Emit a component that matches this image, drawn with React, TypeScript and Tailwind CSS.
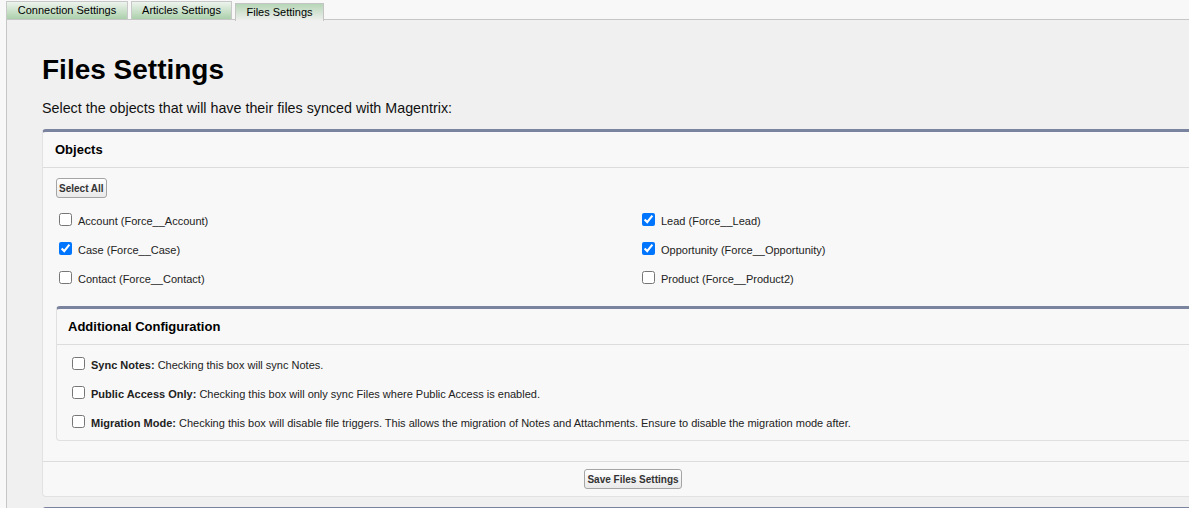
import React from "react";

const objects: [string, boolean][] = [
  ["Account (Force__Account)", false],
  ["Lead (Force__Lead)", true],
  ["Case (Force__Case)", true],
  ["Opportunity (Force__Opportunity)", true],
  ["Contact (Force__Contact)", false],
  ["Product (Force__Product2)", false],
];

const options = [
  { title: "Sync Notes:", text: "Checking this box will sync Notes." },
  { title: "Public Access Only:", text: "Checking this box will only sync Files where Public Access is enabled." },
  {
    title: "Migration Mode:",
    text: "Checking this box will disable file triggers. This allows the migration of Notes and Attachments. Ensure to disable the migration mode after.",
  },
];

function Tab({ label, width, active }: { label: string; width: string; active?: boolean }) {
  if (active) {
    return (
      <div
        className={`relative z-10 mt-[2px] h-[18px] ${width} border border-b-0 border-[#c4c4c4] bg-gradient-to-b from-[#b7d6b7] to-[#f0f0f0] flex items-center justify-center text-[11px] text-black`}
      >
        {label}
      </div>
    );
  }
  return (
    <div
      className={`h-[18px] ${width} border border-b-0 border-[#c8c8c8] bg-gradient-to-b from-[#eef4ee] to-[#abd0ab] flex items-center justify-center text-[11px] text-black`}
    >
      {label}
    </div>
  );
}

function Btn({ children }: { children: React.ReactNode }) {
  return (
    <button className="block h-[20px] px-[2px] pt-[1px] rounded-[3px] border border-[#a5a5a5] bg-gradient-to-b from-white to-[#e9e9e9] text-[10px] font-bold text-[#333] leading-none">
      {children}
    </button>
  );
}

export default function App() {
  return (
    <div className="w-[1189px] h-[508px] overflow-hidden bg-[#f8f8f8] font-['Liberation_Sans',Arial,sans-serif] text-[#222]">
      <div className="w-[1266px]">
        <div className="flex items-start gap-[3px] h-[19px] pt-[1px] pl-[6px]">
          <Tab label="Connection Settings" width="w-[122px]" />
          <Tab label="Articles Settings" width="w-[101px]" />
          <Tab label="Files Settings" width="w-[89px]" active />
        </div>

        <div className="ml-[6px] border-l border-t border-[#c6c6c6] bg-[#f0f0f0] pl-[35px] pt-[36px] pb-[40px]">
          <h1 className="text-[28px] leading-[28px] font-bold text-black">Files Settings</h1>
          <p className="mt-4 text-[14.3px] leading-[17px] text-[#111]">
            Select the objects that will have their files synced with Magentrix:
          </p>

          <div className="mt-[12px] w-[1182px] rounded-[4px] border border-[#e2e2e2] border-t-[3px] border-t-[#7b849e] bg-[#f8f8f8]">
            <div className="h-[36px] flex items-center px-[12px] border-b border-[#dcdcdc]">
              <h2 className="text-[13px] font-bold text-black">Objects</h2>
            </div>

            <div className="px-[13px] pt-[10px] pb-[20px]">
              <Btn>Select All</Btn>

              <div className="mt-[9px] grid grid-cols-[583px_1fr]">
                {objects.map(([label, checked]) => (
                  <label key={label} className="h-[29px] flex items-center gap-[6px] text-[11px]">
                    <input type="checkbox" defaultChecked={checked} className="ml-[3px] mb-[5px] w-[13px] h-[13px]" />
                    <span>{label}</span>
                  </label>
                ))}
              </div>

              <div className="mt-[12px] rounded-[4px] border border-[#e0e0e0] border-t-[3px] border-t-[#7b849e] bg-[#f8f8f8]">
                <div className="h-[36px] flex items-center px-[11px] border-b border-[#dcdcdc]">
                  <h3 className="text-[13px] font-bold text-black">Additional Configuration</h3>
                </div>
                <div className="pt-[6px] pb-[2px]">
                  {options.map(o => (
                    <label key={o.title} className="h-[29px] pl-[15px] flex items-center gap-[6px] text-[11px]">
                      <input type="checkbox" className="mb-[5px] w-[13px] h-[13px]" />
                      <span>
                        <b className="font-bold">{o.title}</b> {o.text}
                      </span>
                    </label>
                  ))}
                </div>
              </div>
            </div>

            <div className="h-[35px] border-t border-[#dcdcdc] flex items-center justify-center">
              <Btn>Save Files Settings</Btn>
            </div>
          </div>

          <div className="mt-[10px] w-[1182px] h-[40px] rounded-[4px] border border-[#e2e2e2] border-t-[3px] border-t-[#7b849e] bg-[#f8f8f8]" />
        </div>
      </div>
    </div>
  );
}
